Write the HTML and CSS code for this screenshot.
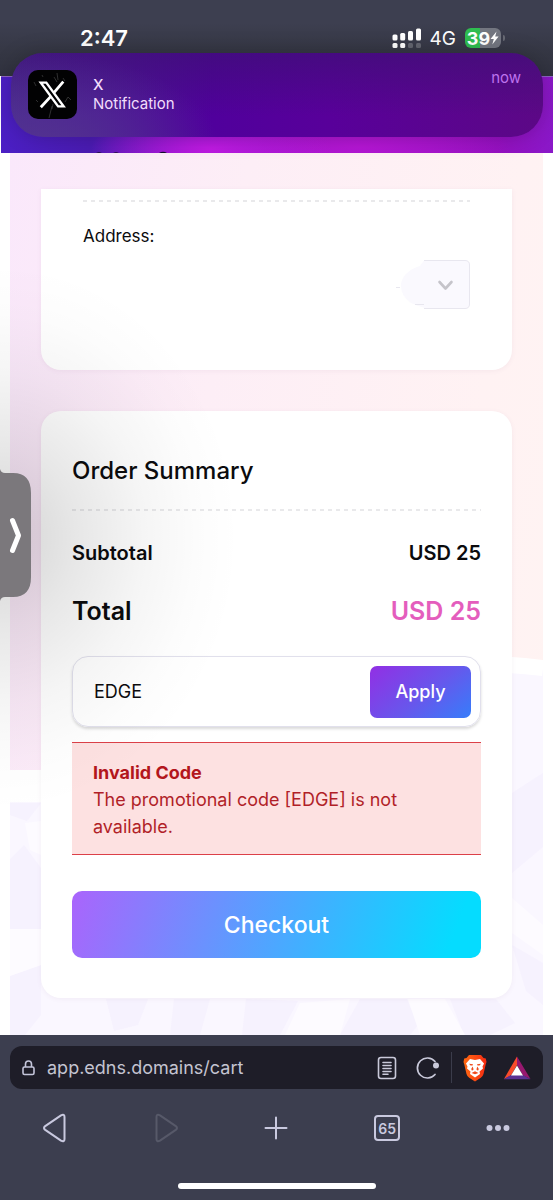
FILE: index.html
```html
<!DOCTYPE html>
<html lang="en">
<head>
<meta charset="utf-8">
<meta name="viewport" content="width=device-width, initial-scale=1">
<title>Cart</title>
<link rel="stylesheet" href="styles.css">
</head>
<body>
<header class="status-bar">
  <time class="clock">2:47</time>
  <div class="status-icons">
    <svg class="signal" width="30" height="21" viewBox="0 0 30 21" fill="#fff" aria-hidden="true">
      <rect x="0.5" y="6.500" width="5" height="6" rx="1.500"/><rect x="8.200" y="5" width="5" height="7.500" rx="1.500"/><rect x="16" y="3" width="5" height="9.500" rx="1.500"/><rect x="24" y="0.500" width="5" height="12" rx="1.500"/>
      <rect x="0.500" y="15" width="5" height="5" rx="1.500"/><rect x="8.200" y="15" width="5" height="5" rx="1.500"/><g opacity=".22"><rect x="16" y="15" width="5" height="5" rx="1.500"/><rect x="24" y="15" width="5" height="5" rx="1.500"/></g>
    </svg>
    <span class="network">4G</span>
    <span class="battery"><span>39</span><svg width="9" height="14" viewBox="0 0 9 14" aria-hidden="true"><path d="M6.500 0.500 L0.500 8 H3.800 L2.300 13.500 L8.600 5.600 H5.200 Z" fill="#fff"/></svg></span>
  </div>
</header>

<div class="hero">
  <svg class="hero-marks" width="80" height="3" viewBox="0 0 80 3" fill="#15102c" aria-hidden="true"><path d="M3 3Q6 1.500 9 3ZM20 3Q23 1.500 26 3ZM66 3Q70 .5 74 3Z"/></svg>
</div>

<aside class="notification">
  <svg class="app-icon" width="49" height="49" viewBox="0 0 49 49" aria-hidden="true">
    <rect width="49" height="49" rx="10" fill="#020203"/>
    <g stroke="#777" stroke-width=".6" opacity=".65"><path d="M29 3l1 7M26 7l3 5M35 8l2 3M40 27l3 3M6 12l2 4M24 36l-3 12M25 34l-1 5M37 32l3-5M8 30l2 2M14 5l1 2"/></g>
    <path d="M12.800 12.600 H18.300 L35.600 36.400 H30.100 Z" fill="none" stroke="#fff" stroke-width="2.400"/>
    <path d="M35.300 11.700L26.200 22.400M22.600 26.600L12.800 37.300" stroke="#fff" stroke-width="2.800"/>
  </svg>
  <div class="notification-text"><strong>X</strong><span>Notification</span></div>
  <span class="notification-time">now</span>
</aside>

<main class="page">
  <svg class="backdrop" viewBox="0 0 533 882" preserveAspectRatio="none" aria-hidden="true">
    <path d="M0 633 C170 600 260 485 533 515 V882 H0Z" fill="#faf7ff"/>
    <g fill="#f4eefd" opacity=".6"><path d="M0 650H31L17 668 0 662ZM0 706L14 692 31 715V776H0ZM0 823L31 812V862L15 882H0ZM96 846L138 846 128 872 104 878ZM164 846H200L190 882H160ZM236 846L288 848 270 882H232ZM350 846H397L408 872 400 882H330ZM440 846L486 846 505 870 480 882H454ZM502 640L533 620V694L502 720ZM502 792L533 810V852L516 838Z"/></g>
    <g fill="#fdfbff"><path d="M0 776H31V812L0 823ZM398 846H435L455 882H410ZM290 850L340 846 330 882H275ZM502 745L533 772V802L502 780ZM15 670L31 668V702L20 697Z"/></g>
    <path d="M0 633 C170 600 260 485 533 515" fill="none" stroke="#fff" stroke-width="16"/>
    <path d="M0 617H31V649H0Z" fill="#fff"/>
  </svg>

  <section class="card address-card">
    <div class="address-body">
      <label for="address">Address:</label>
      <div class="address-select">
        <svg width="74" height="49" viewBox="0 0 74 49" aria-hidden="true">
          <path d="M28 .5H69Q73.500 .5 73.500 5V44Q73.500 48.500 69 48.500H30Q19 45 15 43Q5 36 5 26C5 15 16 8 24 6Z" fill="#faf9fe"/>
          <path d="M28 .5H69Q73.500 .5 73.500 5V44Q73.500 48.500 69 48.500H28M19 44.500H28M0 27.500H4" fill="none" stroke="#e8e7ef"/>
          <path d="M43.500 22L49.500 28.500L55.500 22" fill="none" stroke="#c5c4ca" stroke-width="2.600" stroke-linecap="round" stroke-linejoin="round"/>
        </svg>
        <select id="address"><option></option></select>
      </div>
    </div>
  </section>

  <section class="card summary">
    <h1>Order Summary</h1>
    <dl>
      <div class="subtotal"><dt>Subtotal</dt><dd>USD 25</dd></div>
      <div class="total"><dt>Total</dt><dd>USD 25</dd></div>
    </dl>
    <form class="promo">
      <input type="text" value="EDGE" aria-label="Promotional code">
      <button type="button">Apply</button>
    </form>
    <div class="alert" role="alert">
      <strong>Invalid Code</strong>
      <p>The promotional code [EDGE] is not available.</p>
    </div>
    <button class="checkout" type="button">Checkout</button>
  </section>

  <div class="handle-shade"></div>
  <button class="side-handle" type="button" aria-label="Show panel">
    <svg width="31" height="132" viewBox="0 0 31 132" aria-hidden="true"><path d="M0 0Q1 4 5 4H13Q31 4 31 24V108Q31 128 13 128H5Q1 128 0 132Z" fill="#7b787c"/><path d="M12.500 51.500L18.500 66.500L12.500 81.500" fill="none" stroke="#fff" stroke-width="5" stroke-linecap="round" stroke-linejoin="round"/></svg>
  </button>
</main>

<footer class="browser-bar">
  <div class="address-bar">
    <svg class="lock" width="13" height="16" viewBox="0 0 13 16" fill="none" stroke="#c4c5da" stroke-width="1.600" aria-hidden="true"><rect x="1" y="7" width="11" height="7.500" rx="1.500"/><path d="M3.500 7V4a3 3 0 0 1 6 0V7"/></svg>
    <a class="url" href="#">app.edns.domains/cart</a>
    <button type="button" aria-label="Reader view"><svg width="20" height="24" viewBox="0 0 20 24" fill="none" stroke="#c9c9da" stroke-width="1.600" stroke-linecap="round"><rect x="1.500" y="1.500" width="17" height="21" rx="2.500"/><path d="M6 6.500H14M6 9.500H14M6 12.500H14M6 15.500H14M6 18.200H11"/></svg></button>
    <button class="reload" type="button" aria-label="Reload"><svg width="24" height="24" viewBox="0 0 24 24" fill="none"><path d="M19 18.500A10 10 0 1 1 19 5.500" stroke="#c9c9da" stroke-width="1.700" stroke-linecap="round"/><circle cx="20" cy="9.500" r="3" fill="#c9c9da"/></svg></button>
    <span class="divider"></span>
    <button class="brave" type="button" aria-label="Brave Shields"><svg width="24" height="28" viewBox="0 0 24 28"><defs><linearGradient id="lion"><stop stop-color="#ff6a12"/><stop offset="1" stop-color="#f52b12"/></linearGradient></defs><path d="M6 1H18L20.500 4 22.800 4.500 23.500 8 22.800 10 20.500 20Q19.800 22.500 17.800 23.700L12 27.500 6.200 23.700Q4.200 22.500 3.500 20L1.200 10 .5 8 1.200 4.500 3.500 4Z" fill="url(#lion)"/><path d="M7 5L12 6 17 5 21 9.500 19.500 12.500 20 14.500 16.500 17.500 17 20 12 23.500 7 20 7.500 17.500 4 14.500 4.500 12.500 3 9.500Z" fill="#fff"/><path d="M6 9.800L10 10.300 9.500 11.600 7.500 11.500ZM18 9.800L14 10.300 14.500 11.600 16.500 11.500ZM9.700 12.500L10.600 15.500 9 16.800 8.200 15ZM14.300 12.500L13.400 15.500 15 16.800 15.800 15ZM8.500 19L12 17.200 15.500 19 12 20.300Z" fill="#f04a1c"/></svg></button>
    <button type="button" aria-label="Rewards"><svg width="28" height="24" viewBox="0 0 28 24"><path d="M14 .5V9L8 19.500 1 23Z" fill="#fa4b2a"/><path d="M14 .5L27.500 23 20 19.500 14 9Z" fill="#97186f"/><path d="M.8 23.200L8 19H20L27.500 23.200Z" fill="#5b3192"/><path d="M14 9.500L20 19.500H8Z" fill="#fff"/></svg></button>
  </div>
  <nav class="toolbar">
    <button type="button" aria-label="Back"><svg width="24" height="30" viewBox="0 0 24 30" fill="none" stroke="#c9c9df" stroke-width="2" stroke-linejoin="round"><path d="M2.200 13.100L18 2.300Q21.500 .6 21.500 4V26Q21.500 29.400 18 27.700L2.200 16.900Q-.2 15 2.200 13.100Z"/></svg></button>
    <button type="button" aria-label="Forward" disabled><svg width="24" height="30" viewBox="0 0 24 30" fill="none" stroke="#575969" stroke-width="2" stroke-linejoin="round"><path d="M21.800 13.100L6 2.300Q2.500 .6 2.500 4V26Q2.500 29.400 6 27.700L21.800 16.900Q24.200 15 21.800 13.100Z"/></svg></button>
    <button type="button" aria-label="New tab"><svg width="24" height="24" viewBox="0 0 24 24" stroke="#c9c9df" stroke-width="2" stroke-linecap="round"><path d="M1.500 12H22.500M12 1.500V22.500"/></svg></button>
    <button type="button" aria-label="Open tabs"><span class="tab-count">65</span></button>
    <button type="button" aria-label="Menu"><svg width="24" height="8" viewBox="0 0 24 8" fill="#c9c9df"><circle cx="3.500" cy="4" r="3"/><circle cx="12" cy="4" r="3"/><circle cx="20.500" cy="4" r="3"/></svg></button>
  </nav>
  <div class="home-indicator"></div>
</footer>
</body>
</html>
```
FILE: styles.css
```css
* { box-sizing: border-box; }

body {
  margin: 0;
  min-height: 100vh;
  display: flex;
  flex-direction: column;
  position: relative;
  background: #fff;
  color: #0b0b0d;
  font-family: Inter, "Liberation Sans", sans-serif;
  font-size: 18px;
}

button, input, select { font: inherit; margin: 0; }
button { border: 0; padding: 0; background: none; cursor: pointer; }
svg { display: block; flex: none; }

/* Status bar */
.status-bar {
  height: 76px;
  padding: 26px 52px 26px 80px;
  display: flex;
  justify-content: space-between;
  align-items: center;
  background: linear-gradient(#3d3f50 30%, #353744 70%, #30323f);
  color: #fff;
}
.clock { font-size: 22px; font-weight: 600; }
.status-icons { display: flex; align-items: center; }
.network { margin: 0 9px 0 8px; font-size: 19px; }
.battery {
  position: relative;
  width: 36px;
  height: 20px;
  display: flex;
  align-items: center;
  justify-content: center;
  border-radius: 6px;
  background: linear-gradient(90deg, #2fbd50 15px, #737680 15px);
  font-size: 18px;
  font-weight: 700;
}
.battery::after {
  content: "";
  position: absolute;
  right: -4px;
  top: 7px;
  width: 2px;
  height: 6px;
  border-radius: 0 2px 2px 0;
  background: #686a74;
}

.hero {
  height: 77px;
  margin-left: 1px;
  padding-left: 92px;
  display: flex;
  align-items: flex-end;
  border-top: 1px solid #8d62c5;
  background:
    radial-gradient(120px 36px at 210px 72px, #c01ae2, transparent),
    radial-gradient(150px 30px at 65% 70px, #b516d4, transparent),
    linear-gradient(90deg, #4b1fc4, #4a1bb2 16%, #7c16c6 34%, #a015c8 60%, #9410c0 90%, #8a18c8);
}

/* Notification banner */
.notification {
  position: absolute;
  top: 53px;
  left: 11px;
  right: 10px;
  z-index: 3;
  min-height: 84px;
  padding: 17px 22px 17px 17px;
  display: flex;
  gap: 16px;
  border-radius: 32px;
  background:
    radial-gradient(180px 100px at 30px 100px, #533390, transparent),
    linear-gradient(#3d1074aa, transparent 75%),
    linear-gradient(90deg, #482990, #50009c 38%, #58009a 60%, #5c0886);
  box-shadow: 0 0 22px #0003;
  color: #f2dcfc;
}
.notification-text {
  flex: 1;
  display: flex;
  flex-direction: column;
  padding-top: 5px;
  font-size: 15px;
  line-height: 19px;
}
.notification-text strong { font-weight: 500; }
.notification-time { font-size: 15px; line-height: 16px; color: #bd72ed; }

/* Page */
.page {
  flex: 1;
  position: relative;
  margin: 0 10px;
  padding: 36px 31px 37px;
  display: flex;
  flex-direction: column;
  gap: 41px;
  background: linear-gradient(100deg, #fae8fb, #fdeef6 35%, #fff2f3 75%, #fff4f2);
}
.backdrop { position: absolute; inset: 0; width: 100%; height: 100%; }

.card {
  position: relative;
  border-radius: 20px;
  background: #fff;
  box-shadow: 0 1px 5px #80508012;
}
.address-card {
  padding: 11px 42px 61px;
  border-radius: 0 0 20px 20px;
}
.address-body {
  padding-top: 22px;
  display: flex;
  flex-direction: column;
  gap: 10px;
}
.address-body, .summary dl {
  background: repeating-linear-gradient(90deg, #e9e9eb 0 4px, transparent 4px 8px) top / 100% 2px no-repeat;
}
.address-body label { font-size: 17px; line-height: 28px; }
.address-select { position: relative; align-self: flex-end; }
.address-select select {
  position: absolute;
  inset: 0;
  width: 100%;
  border: 0;
  appearance: none;
  background: transparent;
}

.summary { padding: 40px 31px 40px; }
.summary h1 {
  margin: 0 0 18px;
  font-size: 24px;
  line-height: 40px;
  font-weight: 500;
}
.summary dl { margin: 0; padding-top: 30px; }
.summary dl div { display: flex; justify-content: space-between; }
.summary dd { margin: 0; }
.subtotal { font-size: 20px; line-height: 28px; font-weight: 600; }
.summary .total {
  margin: 26px 0 27px;
  font-size: 25px;
  line-height: 36px;
  font-weight: 600;
}
.total dd { color: #e45dbd; }

.promo {
  height: 71px;
  padding: 8px 9px 8px 21px;
  display: flex;
  align-items: center;
  border: 1px solid #e1e0ec;
  border-radius: 16px;
  box-shadow: 0 2px 3px #00000026;
}
.promo input {
  flex: 1;
  min-width: 0;
  padding: 0;
  border: 0;
  outline: 0;
  background: none;
  color: #0b0b0d;
}
.promo button {
  width: 101px;
  height: 52px;
  border-radius: 7px;
  background: linear-gradient(140deg, #922fe4, #6757ec 55%, #367dfa);
  color: #fff;
  font-weight: 500;
}

.alert {
  margin-top: 15px;
  padding: 16px 20px 14px 21px;
  border-top: 1px solid #dc4048;
  border-bottom: 1px solid #dc4048;
  background: #fde1e1;
  color: #b11f28;
  line-height: 27px;
}
.alert strong { font-weight: 700; color: #b3161c; }
.alert p { margin: 0; }

.checkout {
  display: block;
  width: 100%;
  height: 67px;
  margin-top: 36px;
  border-radius: 10px;
  background: linear-gradient(110deg, #aa64fc, #4ba8ff 52%, #05dcff 92%);
  color: #fff;
  font-size: 23px;
  font-weight: 500;
}

/* Edge handle with its soft shadow over the page */
.handle-shade {
  position: absolute;
  top: 110px;
  left: -10px;
  z-index: 1;
  width: 260px;
  height: 560px;
  background: radial-gradient(240px 275px at 0 49%, #0000002c, #00000018 32%, #0000000a 60%, #00000003 82%, transparent);
  pointer-events: none;
}
.side-handle {
  position: absolute;
  top: 316px;
  left: -10px;
  z-index: 2;
}

/* Browser controls */
.browser-bar { padding: 11px 10px; background: #3c3e4f; }
.address-bar {
  height: 43px;
  padding: 0 12px;
  display: flex;
  align-items: center;
  border-radius: 12px;
  background: #1e1d28;
}
.url {
  flex: 1;
  margin-left: 12px;
  color: #c4c4d1;
  text-decoration: none;
}
.reload { margin: 0 11px 0 19px; }
.divider { width: 1px; height: 31px; background: #3b3c4b; }
.brave { margin: 0 16px 0 11px; }
.toolbar {
  height: 78px;
  margin: 0 -10px;
  display: grid;
  grid-template-columns: repeat(5, 1fr);
}
.toolbar button { display: grid; place-items: center; }
.tab-count {
  width: 26px;
  height: 26px;
  display: grid;
  place-items: center;
  border: 2px solid #c9c9df;
  border-radius: 4px;
  color: #c9c9df;
  font-size: 14px;
  font-weight: 600;
}
.home-indicator {
  width: 198px;
  height: 6px;
  margin: 16px auto 0;
  border-radius: 3px;
  background: #fff;
}
```
